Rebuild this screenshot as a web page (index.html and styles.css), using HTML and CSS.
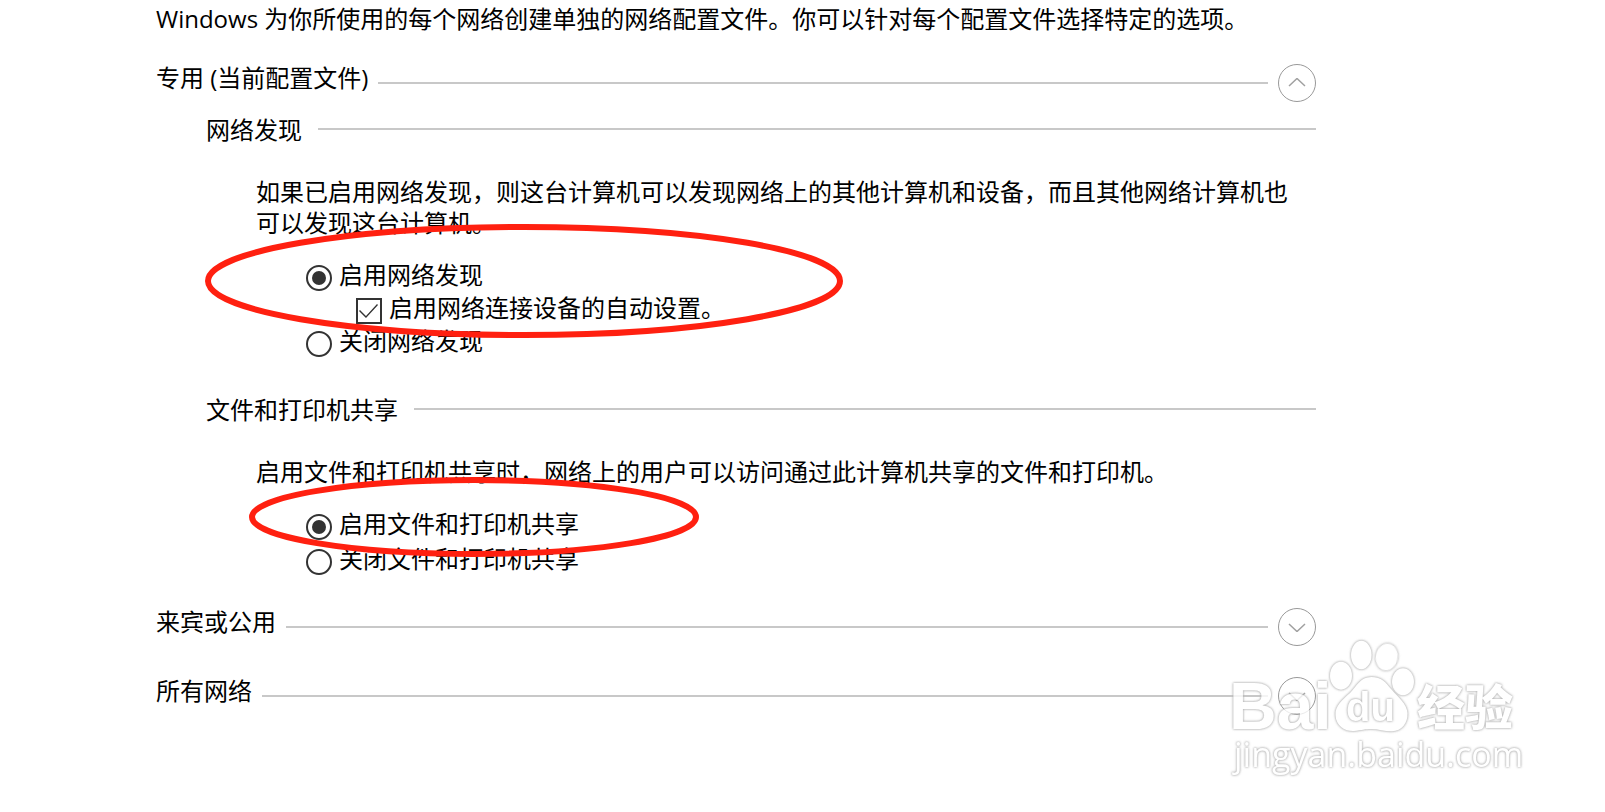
FILE: index.html
```html
<!DOCTYPE html>
<html lang="zh-CN">
<head>
  <meta charset="utf-8">
  <title>高级共享设置</title>
  <meta name="viewport" content="width=device-width, initial-scale=1.0">
  <link rel="stylesheet" href="styles.css">
</head>
<body>

  <main class="page">
    <p class="intro">Windows 为你所使用的每个网络创建单独的网络配置文件。你可以针对每个配置文件选择特定的选项。</p>

    <section class="profile">
      <div class="profile-head">
        <h2>专用 (当前配置文件)</h2>
        <span class="line"></span>
        <button type="button" class="toggle" aria-label="折叠" aria-expanded="true">
          <svg width="18" height="10" viewBox="0 0 18 10"><path d="M1 8L9 0.500L17 8"/></svg>
        </button>
      </div>

      <div class="group">
        <div class="group-head">
          <h3>网络发现</h3>
          <span class="line"></span>
        </div>
        <p class="desc">如果已启用网络发现，则这台计算机可以发现网络上的其他计算机和设备，而且其他网络计算机也可以发现这台计算机。</p>
        <div class="options">
          <div class="option">
            <input type="radio" name="discovery" id="discovery-on" checked>
            <label for="discovery-on">启用网络发现</label>
          </div>
          <div class="option nested">
            <input type="checkbox" id="auto-setup" checked>
            <label for="auto-setup">启用网络连接设备的自动设置。</label>
          </div>
          <div class="option">
            <input type="radio" name="discovery" id="discovery-off">
            <label for="discovery-off">关闭网络发现</label>
          </div>
        </div>
      </div>

      <div class="group sharing">
        <div class="group-head">
          <h3>文件和打印机共享</h3>
          <span class="line"></span>
        </div>
        <p class="desc">启用文件和打印机共享时，网络上的用户可以访问通过此计算机共享的文件和打印机。</p>
        <div class="options loose">
          <div class="option">
            <input type="radio" name="sharing" id="sharing-on" checked>
            <label for="sharing-on">启用文件和打印机共享</label>
          </div>
          <div class="option">
            <input type="radio" name="sharing" id="sharing-off">
            <label for="sharing-off">关闭文件和打印机共享</label>
          </div>
        </div>
      </div>
    </section>

    <section class="profile">
      <div class="profile-head">
        <h2>来宾或公用</h2>
        <span class="line"></span>
        <button type="button" class="toggle" aria-label="展开" aria-expanded="false">
          <svg width="18" height="10" viewBox="0 0 18 10"><path d="M1 2L9 9.500L17 2"/></svg>
        </button>
      </div>
    </section>

    <section class="profile">
      <div class="profile-head">
        <h2>所有网络</h2>
        <span class="line"></span>
        <button type="button" class="toggle" aria-label="展开" aria-expanded="false">
          <svg width="18" height="10" viewBox="0 0 18 10"><path d="M1 2L9 9.500L17 2"/></svg>
        </button>
      </div>
    </section>
  </main>

  <!-- red marks over the options -->
  <svg class="mark mark-discovery" width="638" height="114" viewBox="0 0 638 114"><ellipse cx="319" cy="57" rx="316" ry="54"/></svg>
  <svg class="mark mark-sharing" width="450" height="80" viewBox="0 0 450 80"><ellipse cx="225" cy="40" rx="222" ry="37"/></svg>

  <svg class="watermark" width="300" height="145" viewBox="25 35 300 145">
    <text class="bai" x="29" y="129">Bai</text>
    <ellipse cx="141" cy="75.700" rx="11" ry="14"/>
    <ellipse cx="161.300" cy="55" rx="10.300" ry="14.300"/>
    <ellipse cx="186.700" cy="57" rx="11" ry="13.500" transform="rotate(10 186.700 57)"/>
    <ellipse cx="203" cy="81.700" rx="11" ry="13.500"/>
    <path d="M171.300 77C160 77 157 86 150 93C142 100 135 106 135.500 115C136 127 146 131.500 154 131C162 130 165 129 171.300 129C178 129 185 131.500 192 131.300C202 131 208 123 207.500 113C207 104 198 97 192 90C185 82 182 77 171.300 77Z"/>
    <text class="du" x="146" y="121">du</text>
    <text class="jingyan" x="217" y="125">经验</text>
    <text class="site" x="34" y="167">jingyan.baidu.com</text>
  </svg>

</body>
</html>
```

FILE: styles.css
```css
body {
  position: relative;
  min-height: 100vh;
  margin: 0;
  background-color: #fff;
  color: #000;
  font-family: "Open Sans", "Noto Sans CJK SC", sans-serif;
  font-size: 24px;
  line-height: 30px;
}

h2, h3, p {
  margin: 0;
  font-size: 24px;
  font-weight: normal;
}

.page {
  padding: 5px 289px 40px 156px;
}

.intro {
  line-height: 28px;
}

.profile {
  margin-top: 31px;
}

.profile-head {
  display: flex;
  gap: 10px;
  height: 38px;
}

.profile-head h2 {
  line-height: 28px;
}

.line {
  flex: 1;
  align-self: center;
  height: 2px;
  background-color: #c8c8c8;
}

.toggle {
  display: flex;
  align-items: center;
  justify-content: center;
  width: 38px;
  height: 38px;
  padding: 0;
  border: 1px solid #999;
  border-radius: 50%;
  background-color: transparent;
}

.toggle svg {
  fill: none;
  stroke: #a0a0a0;
  stroke-width: 1.5;
}

.group {
  margin-top: 10px;
  padding-left: 50px;
}

.sharing {
  margin-top: 33px;
}

.group-head {
  display: flex;
  gap: 16px;
  height: 34px;
}

.group-head h3 {
  padding-top: 3px;
}

.desc {
  margin-top: 30px;
  padding: 0 20px 0 50px;
  line-height: 31px;
}

.options {
  display: flex;
  flex-direction: column;
  gap: 3px;
  margin-top: 25px;
  padding-left: 100px;
}

.loose {
  gap: 5px;
}

.option {
  display: flex;
  gap: 7px;
  height: 30px;
}

.option label {
  line-height: 24px;
}

.nested {
  padding-left: 50px;
}

.option input {
  display: grid;
  place-content: center;
  align-self: center;
  appearance: none;
  width: 26px;
  height: 26px;
  margin: 0;
  border: 2px solid #333;
  background-color: #fff;
}

input[type="radio"] {
  border-radius: 50%;
}

input[type="radio"]:checked::before {
  content: "";
  width: 14px;
  height: 14px;
  border-radius: 50%;
  background-color: #333;
}

/* tick */
input[type="checkbox"]:checked::before {
  content: "";
  width: 20px;
  height: 14px;
  background-color: #333;
  clip-path: polygon(0 7px, 1px 6px, 7px 12px, 18px 0, 19px 1px, 7px 14px);
}

.mark {
  position: absolute;
  fill: none;
  stroke: #ff2010;
  stroke-width: 6;
  pointer-events: none;
}

.mark-discovery {
  top: 224px;
  left: 205px;
}

.mark-sharing {
  top: 477px;
  left: 249px;
}

.watermark {
  position: absolute;
  top: 635px;
  right: 80px;
  fill: #fff;
  opacity: 0.8;
  pointer-events: none;
}

/* white shapes with a soft grey edge */
.watermark > * {
  filter: drop-shadow(0 0 1px #999) drop-shadow(0 0 1px #ccc);
}

.bai {
  font: bold 66px "Liberation Sans", sans-serif;
}

.du {
  font: bold 40px "Liberation Sans", sans-serif;
}

.jingyan {
  font: 900 48px "Noto Sans CJK SC", sans-serif;
}

.site {
  font: 34px "Open Sans", sans-serif;
}
```
